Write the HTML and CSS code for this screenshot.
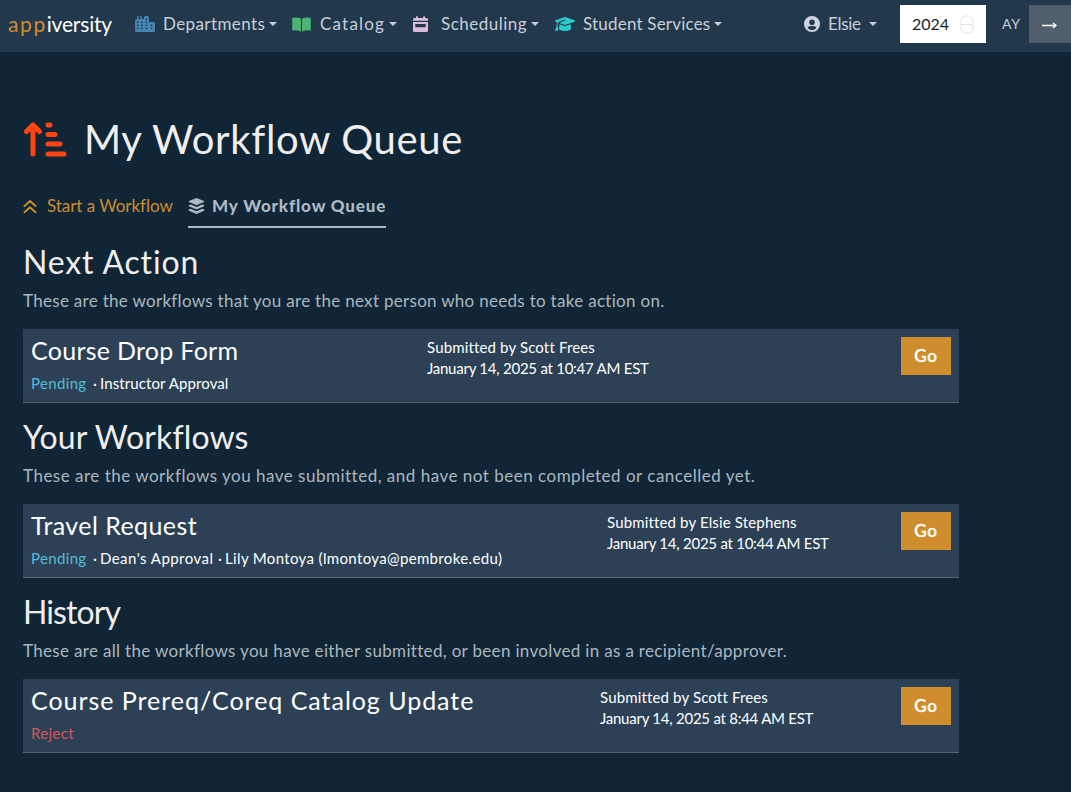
FILE: index.html
```html
<!DOCTYPE html>
<html lang="en">
<head>
<meta charset="utf-8">
<title>My Workflow Queue</title>
<link rel="stylesheet" href="styles.css">
</head>
<body>
<nav class="navbar">
  <a class="brand"><span class="brand-app">app</span>iversity</a>
  <a class="nav-item departments">
    <svg class="nav-icon" width="20" height="16" viewBox="0 0 20 16"><path fill="#4684b2" fill-rule="evenodd" d="M1.500 3H2V0H3.500V3H5.200V0H6.700V3H9V1.500Q9 0 10.500 0h2Q14 0 14 1.500V6h4.500Q20 6 20 7.500v7q0 1.500-1.500 1.500h-17Q0 16 0 14.500v-10Q0 3 1.500 3ZM2 5.500v1.500h1.500V5.500Zm4 0v1.500h1.500V5.500ZM2 8.500v1.500h1.500V8.500Zm4 0v1.500h1.500V8.500ZM2 11.500v1.500h1.500v-1.500Zm4 0v1.500h1.500v-1.500ZM10.700 2.500v1.500h1.500V2.500Zm0 3v1.500h1.500V5.500Zm0 3v1.500h1.500V8.500Zm5 0v1.500h1.500V8.500Zm0 3v1.500h1.500v-1.500Zm-5 0v1.500h1.500v-1.500Z"/></svg>
    <span>Departments</span><i class="caret"></i>
  </a>
  <a class="nav-item catalog">
    <svg class="nav-icon" width="19" height="15" viewBox="0 0 19 15"><path fill="#4cb575" d="M9 1.400v13.200Q5.500 12.800.8 13.400.2 13.400.2 12.800V1.500Q.2.900.8.800 5.500-.2 9 1.400Zm1 0v13.200q3.500-1.800 8.200-1.200.6 0 .6-.6V1.500q0-.6-.6-.7Q13.500-.2 10 1.400Z"/></svg>
    <span>Catalog</span><i class="caret"></i>
  </a>
  <a class="nav-item scheduling">
    <svg class="nav-icon" width="15" height="16" viewBox="0 0 15 16"><path fill="#dabfdc" fill-rule="evenodd" d="M3 2V.8Q3.900-.6 4.800.8V2h5.400V.8q.9-1.400 1.800 0V2h1.500Q15 2 15 3.500V4.800H0V3.500Q0 2 1.500 2ZM0 6h15v8.500q0 1.500-1.500 1.500h-12Q0 16 0 14.500Zm2.300 2v3.200h10.400V8Z"/></svg>
    <span>Scheduling</span><i class="caret"></i>
  </a>
  <a class="nav-item services">
    <svg class="nav-icon" width="20" height="16" viewBox="0 0 640 512"><path fill="#2bcbcb" d="M320 32c-8.100 0-16.100 1.400-23.700 4.100L15.800 137.400C6.300 140.900 0 149.900 0 160s6.300 19.100 15.800 22.600l57.900 20.900C57.300 229.300 48 259.800 48 291.900v28.100c0 28.400-10.800 57.700-22.300 80.800-6.500 13-13.900 25.800-22.500 37.600C0 442.700-.9 448.300.9 453.400s6 8.900 11.200 10.200l64 16c4.200 1.100 8.700.3 12.400-2s6.300-6.100 7.100-10.400c8.600-42.800 4.300-81.200-2.100-108.700C90.300 344.300 86 329.800 80 316.500V291.900c0-30.200 10.200-58.700 27.900-81.500 12.900-15.500 29.600-28 49.200-35.700l157-61.700c8.200-3.200 17.500.8 20.700 9s-.8 17.500-9 20.700l-157 61.700c-12.400 4.900-23.300 12.400-32.200 21.600l159.600 57.600c7.600 2.700 15.600 4.100 23.700 4.100s16.100-1.400 23.700-4.100L624.200 182.600c9.500-3.400 15.800-12.500 15.800-22.600s-6.300-19.100-15.800-22.600L343.700 36.100C336.100 33.400 328.100 32 320 32zM128 408c0 35.300 86 72 192 72s192-36.700 192-72L496.700 262.600 354.500 314c-11.100 4-22.800 6-34.500 6s-23.500-2-34.500-6L143.300 262.600 128 408z"/></svg>
    <span>Student Services</span><i class="caret"></i>
  </a>
  <a class="nav-item user">
    <svg class="nav-icon" width="16" height="16" viewBox="0 0 16 16"><path fill="#ced5df" fill-rule="evenodd" d="M8 0a8 8 0 1 0 0 16A8 8 0 0 0 8 0Zm0 3.400a2.800 2.800 0 1 1 0 5.600 2.800 2.800 0 0 1 0-5.600ZM3.500 12.100q.7-2.100 3-2.100h3q2.300 0 3 2.100Q10.700 14.200 8 14.200T3.500 12.100Z"/></svg>
    <span>Elsie</span><i class="caret"></i>
  </a>
  <div class="year"><span>2024</span>
    <svg width="14" height="19" viewBox="0 0 14 19"><rect x="1" y="1" width="12" height="17" rx="5" fill="#fff" stroke="#e3e3e3"/><path d="M1 9.500h12" stroke="#e3e3e3"/></svg>
  </div>
  <span class="ay">AY</span>
  <a class="next"><svg width="17" height="10" viewBox="0 0 17 10"><path d="M1 5.500h14M12 3l3 2.500-3 2.500" fill="none" stroke="#fff" stroke-width="1.300"/></svg></a>
</nav>
<main class="page">
  <header class="title">
    <svg width="43" height="36" viewBox="0 0 43 36"><path d="M9 32V3M2.500 9.500 9 3l6.500 6.500M24 3h2M24 12.500h7M24 22h12M24 32h16" fill="none" stroke="#ff4512" stroke-width="5" stroke-linecap="round" stroke-linejoin="round"/></svg>
    <h1>My Workflow Queue</h1>
  </header>
  <div class="tabs">
    <a class="tab start">
      <svg width="14" height="14" viewBox="0 0 14 14"><path d="M1.500 6 7 1l5.500 5M1.500 12.200 7 7.200l5.500 5" fill="none" stroke="#cf8d2e" stroke-width="1.900" stroke-linecap="round" stroke-linejoin="round"/></svg>
      <span>Start a Workflow</span>
    </a>
    <a class="tab active">
      <svg width="17" height="16" viewBox="0 0 16 16"><path fill="#adb9c4" d="M8 0 15.500 3Q16.300 3.500 15.500 4.100L8 7.300.5 4.100Q-.3 3.500.5 3ZM.4 7.200 2.200 6.500 8 9l5.800-2.500 1.800.7q.8.600 0 1.100L8 11.500.4 8.300Q-.4 7.800.4 7.200ZM.4 11.600l1.800-.8L8 13.300l5.800-2.500 1.800.8q.8.500 0 1.100L8 16 .4 12.700Q-.4 12.100.4 11.600Z"/></svg>
      <span>My Workflow Queue</span>
    </a>
  </div>

  <section>
    <h2 class="h-next">Next Action</h2>
    <p class="lead l-next">These are the workflows that you are the next person who needs to take action on.</p>
    <article class="card c-drop">
      <div class="what"><h3>Course Drop Form</h3><div class="status"><span class="pending">Pending</span><span class="dot">·</span><span class="s-instr">Instructor Approval</span></div></div>
      <div class="when"><div class="by">Submitted by Scott Frees</div><div class="date">January 14, 2025 at 10:47 AM EST</div></div>
      <a class="go">Go</a>
    </article>
  </section>

  <section>
    <h2 class="h-your">Your Workflows</h2>
    <p class="lead l-your">These are the workflows you have submitted, and have not been completed or cancelled yet.</p>
    <article class="card c-travel">
      <div class="what"><h3>Travel Request</h3><div class="status"><span class="pending">Pending</span><span class="dot">·</span><span class="s-dean">Dean's Approval</span><span class="dot">·</span><span class="s-lily">Lily Montoya (lmontoya@pembroke.edu)</span></div></div>
      <div class="when"><div class="by">Submitted by Elsie Stephens</div><div class="date">January 14, 2025 at 10:44 AM EST</div></div>
      <a class="go">Go</a>
    </article>
  </section>

  <section>
    <h2 class="h-hist">History</h2>
    <p class="lead l-hist">These are all the workflows you have either submitted, or been involved in as a recipient/approver.</p>
    <article class="card c-prereq">
      <div class="what"><h3>Course Prereq/Coreq Catalog Update</h3><div class="status"><span class="reject">Reject</span></div></div>
      <div class="when"><div class="by">Submitted by Scott Frees</div><div class="date">January 14, 2025 at 8:44 AM EST</div></div>
      <a class="go">Go</a>
    </article>
  </section>
</main>
</body>
</html>
```
FILE: styles.css
```css
* { box-sizing: border-box; }
body { margin: 0; height: 792px; overflow: hidden; background: #102636; color: #f0eeed; font: 400 17px/24px Lato, sans-serif; font-kerning: normal; font-variant-ligatures: none; white-space: nowrap; }
svg { display: block; flex: none; }
h1, h2, h3, p { margin: 0; font-weight: 400; }

.navbar { display: flex; align-items: center; height: 52px; padding: 0 0 4px 8px; background: #22384c; color: #c9cfd6; }
.brand { width: 127px; font-size: 21px; line-height: 28px; color: #fff; letter-spacing: -.2px; }
.brand-app { color: #cf8d2e; letter-spacing: 1.6px; }
.nav-item { display: flex; align-items: center; gap: 8px; }
.caret { width: 0; height: 0; margin-left: -4px; border: 4px solid transparent; border-top-color: currentColor; border-bottom: 0; }
.departments { width: 157px; letter-spacing: .4px; }
.catalog { width: 121px; letter-spacing: 1.2px; }
.catalog .nav-icon { margin-right: 1px; }
.scheduling { width: 142px; letter-spacing: .5px; }
.scheduling .nav-icon { margin-right: 5px; }
.services { width: 249px; letter-spacing: .2px; }
.user { width: 96px; letter-spacing: -.3px; }
.user .caret { margin-left: 0; }
.year { display: flex; align-items: center; justify-content: space-between; width: 86px; height: 38px; padding: 0 12px; background: #fff; color: #212529; font-size: 16px; }
.ay { width: 43px; padding-left: 16px; font-size: 14px; letter-spacing: .7px; }
.next { display: flex; align-items: center; flex: 1; height: 38px; padding: 2px 0 0 12px; background: #505f6b; }

.page { width: 959px; padding: 63px 0 0 23px; }
.title { display: flex; align-items: center; gap: 17px; height: 48px; padding-left: 1px; }
.title svg { margin-top: 2px; }
.title h1 { font-size: 40px; line-height: 48px; letter-spacing: .65px; }
.tabs { display: flex; gap: 16px; height: 43px; margin-top: 22px; margin-bottom: 15px; }
.tab { display: flex; align-items: center; height: 43px; }
.start { width: 149px; gap: 10px; color: #cf8d2e; letter-spacing: -.05px; }
.start span { margin-top: -2px; }
.active { width: 198px; gap: 7px; border-bottom: 2px solid #adb9c4; color: #adb9c4; font-weight: 900; letter-spacing: .85px; }

section { height: 175px; }
h2 { font-size: 32px; line-height: 38px; letter-spacing: .85px; }
.h-your { letter-spacing: .1px; }
.h-hist { letter-spacing: -.9px; }
.lead { height: 24px; margin: 8px 0 16px; color: #acb6bf; letter-spacing: .3px; }
.l-your { letter-spacing: .5px; }
.l-hist { letter-spacing: .33px; }
.card { display: flex; height: 74px; padding: 8px; border-bottom: 1px solid #526371; background: #2c4156; color: #fff; }
.what { flex: none; }
h3 { margin-top: -1px; font-size: 25px; line-height: 29px; letter-spacing: .28px; }
.c-travel h3 { letter-spacing: .43px; }
.c-prereq h3 { letter-spacing: .97px; }
.status { display: flex; margin-top: 8px; font-size: 15px; line-height: 21px; letter-spacing: .35px; }
.pending { width: 62px; color: #56bcd8; }
.dot { width: 7px; }
.s-instr { letter-spacing: .1px; }
.s-dean { width: 118px; letter-spacing: .45px; }
.reject { color: #d15759; }
.when { flex: 1; font-size: 15px; line-height: 21px; }
.by { letter-spacing: .15px; }
.date { letter-spacing: -.25px; }
.go { display: flex; align-items: center; justify-content: center; width: 50px; height: 38px; background: #cf8d2e; font-weight: 500; -webkit-text-stroke: .4px #fff; letter-spacing: .8px; }
.c-drop .what { width: 396px; }
.c-travel .what { width: 576px; }
.c-prereq .what { width: 569px; }
```
